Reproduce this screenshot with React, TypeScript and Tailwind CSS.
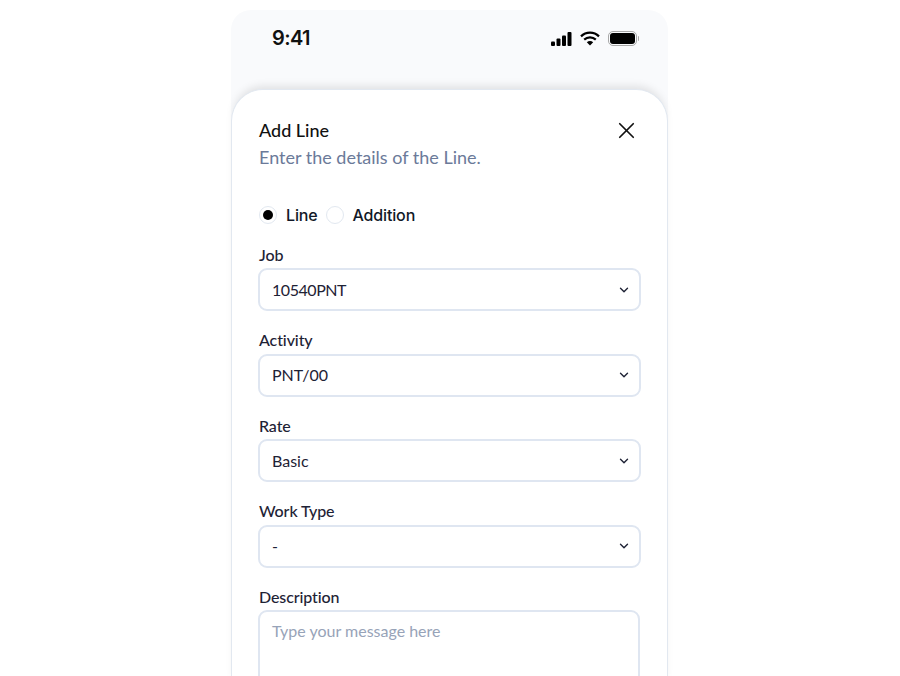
import { ChevronDown, X } from "lucide-react";

const fields = [
  { label: "Job", value: "10540PNT", valueClass: "tracking-[-0.45px]" },
  { label: "Activity", value: "PNT/00", valueClass: "" },
  { label: "Rate", value: "Basic", valueClass: "" },
  { label: "Work Type", value: "-", valueClass: "" },
];

function StatusIcons() {
  return (
    <div className="flex items-center">
      <svg width="21" height="14" viewBox="0 0 21 14" fill="#000">
        <rect x="0" y="9.5" width="4" height="4.5" rx="1" />
        <rect x="5.5" y="6.5" width="4" height="7.5" rx="1" />
        <rect x="11" y="3.5" width="4" height="10.5" rx="1" />
        <rect x="16.5" y="0" width="4" height="14" rx="1" />
      </svg>
      <svg className="ml-[8px]" width="20" height="15" viewBox="0 0 20 15" fill="none" stroke="#000" strokeWidth="2.2">
        <path d="M1 5.4 C6 0.4 14 0.4 19 5.4" />
        <path d="M4.2 8.6 C7.4 5.6 12.6 5.6 15.8 8.6" />
        <path d="M10 14.6 L6.8 11.3 C8.6 9.7 11.4 9.7 13.2 11.3 Z" fill="#000" stroke="none" />
      </svg>
      <div className="ml-[8px] flex items-center gap-[1px]">
        <div className="flex h-[15px] w-[29px] items-center justify-center rounded-[5px] border border-[#a8a8a8]">
          <div className="h-[11px] w-[25px] rounded-[3px] bg-black" />
        </div>
        <div className="h-[5px] w-[1px] rounded-r-full bg-[#a8a8a8]" />
      </div>
    </div>
  );
}

function Radio({ label, checked }: { label: string; checked?: boolean }) {
  return (
    <div className="flex items-center gap-[9px]">
      <div className="flex h-[18px] w-[18px] items-center justify-center rounded-full border border-[#e2e8f0] bg-white">
        {checked && <div className="h-[10px] w-[10px] rounded-full bg-black" />}
      </div>
      <span className="font-['Inter',sans-serif] text-[16px] font-medium leading-[20px] tracking-[-0.15px] text-[#111827]">{label}</span>
    </div>
  );
}

function SelectField({ label, value, valueClass }: { label: string; value: string; valueClass: string }) {
  return (
    <div className="flex flex-col gap-[3.5px]">
      <label className="text-[16px] font-medium leading-[20px] tracking-[-0.1px] text-[#1e2235]">{label}</label>
      <div className="-ml-[1px] flex h-[43px] w-[383px] items-center justify-between rounded-[9px] border-2 border-[#dfe6f1] bg-white pl-[12px] pr-[8px]">
        <span className={`text-[16px] leading-[20px] text-[#1e2235] ${valueClass}`}>{value}</span>
        <ChevronDown size={14} strokeWidth={2.4} color="#1e2235" />
      </div>
    </div>
  );
}

export default function App() {
  return (
    <div className="h-[676px] overflow-hidden bg-white pl-[231px] pt-[10px] font-['Lato',sans-serif]">
      <div className="w-[437px] rounded-t-[20px] bg-[#f9fafc]">
        <div className="flex h-[79px] justify-between pl-[41px] pr-[29px] pt-[16px]">
          <span className="font-['Inter',sans-serif] text-[20px] font-semibold leading-[24px] tracking-[-0.6px] text-[#111]">9:41</span>
          <div className="h-[24px] self-start pt-[5px]">
            <StatusIcons />
          </div>
        </div>
        <div className="h-[597px] rounded-t-[32px] border border-b-0 border-[#e2e8f0] bg-white pl-[27px] pr-[26px] pt-[28px] shadow-[0_-6px_8px_-3px_rgba(0,0,0,0.1)]">
          <div className="flex items-start justify-between pr-[4px]">
            <div>
              <h2 className="mt-[1px] text-[18px] font-medium leading-[22px] text-[#111]">Add Line</h2>
              <p className="mt-[4px] text-[18px] leading-[24px] text-[#6b7a99]">Enter the details of the Line.</p>
            </div>
            <X size={27} strokeWidth={1.5} color="#111" className="-mr-[2.5px] -mt-[1.5px]" />
          </div>
          <div className="mt-[36px] flex gap-[8px]">
            <Radio label="Line" checked />
            <Radio label="Addition" />
          </div>
          <div className="mt-[19.5px] flex flex-col gap-[19px]">
            {fields.map((f) => (
              <SelectField key={f.label} label={f.label} value={f.value} valueClass={f.valueClass} />
            ))}
            <div className="flex flex-col gap-[3.5px]">
              <label className="text-[16px] font-medium leading-[20px] tracking-[-0.1px] text-[#1e2235]">Description</label>
              <div className="-ml-[1px] h-[90px] w-[382px] rounded-[9px] border-2 border-[#dfe6f1] bg-white pl-[12px] pt-[7px]">
                <span className="text-[16px] leading-[20px] text-[#97a3b8]">Type your message here</span>
              </div>
            </div>
          </div>
        </div>
      </div>
    </div>
  );
}
